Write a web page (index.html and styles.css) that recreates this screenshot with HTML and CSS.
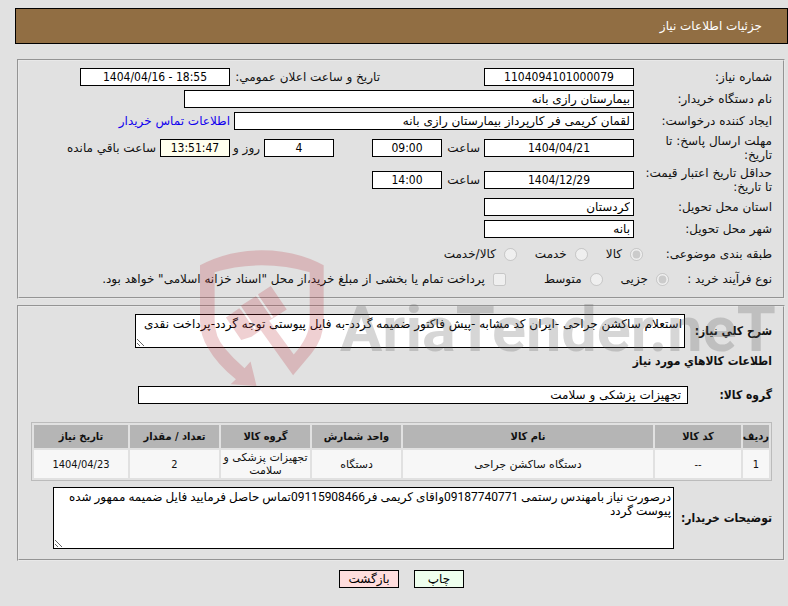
FILE: index.html
```html
<!DOCTYPE html>
<html lang="fa" dir="rtl">

<head>
  <meta charset="UTF-8">
  <meta name="viewport" content="width=device-width, initial-scale=1.0">
  <title>جزئیات اطلاعات نیاز</title>
  <link rel="stylesheet" href="styles.css">
</head>

<body>
  <h1 class="page-title">جزئیات اطلاعات نیاز</h1>

  <form>
    <fieldset class="box">
      <div class="row">
        <label class="caption" for="needNumber">شماره نیاز:</label>
        <input type="text" class="medium center" id="needNumber" value="1104094101000079" readonly>
        <label class="announce" for="announceDate">تاریخ و ساعت اعلان عمومي:</label>
        <input type="text" class="medium center" id="announceDate" dir="ltr" value="1404/04/16 - 18:55" readonly>
      </div>
      <div class="row">
        <label class="caption" for="buyerName">نام دستگاه خریدار:</label>
        <input type="text" class="wide" id="buyerName" value="بیمارستان رازی بانه" readonly>
      </div>
      <div class="row">
        <label class="caption" for="requester">ایجاد کننده درخواست:</label>
        <input type="text" class="large" id="requester" value="لقمان کریمی فر کارپرداز بیمارستان رازی بانه" readonly>
        <a href="#">اطلاعات تماس خریدار</a>
      </div>
      <div class="row tall">
        <label class="caption" for="replyDate">مهلت ارسال پاسخ: تا تاریخ:</label>
        <input type="text" class="medium center" id="replyDate" value="1404/04/21" readonly>
        <label class="hour" for="replyTime">ساعت</label>
        <input type="text" class="small center" id="replyTime" value="09:00" readonly>
        <input type="text" class="small center remaining" id="daysLeft" value="4" readonly>
        <label class="days" for="daysLeft">روز و</label>
        <input type="text" class="small center timer" id="timeLeft" value="13:51:47" readonly>
        <label for="timeLeft">ساعت باقي مانده</label>
      </div>
      <div class="row tall">
        <label class="caption" for="priceDate">حداقل تاریخ اعتبار قیمت: تا تاریخ:</label>
        <input type="text" class="medium center" id="priceDate" value="1404/12/29" readonly>
        <label class="hour" for="priceTime">ساعت</label>
        <input type="text" class="small center" id="priceTime" value="14:00" readonly>
      </div>
      <div class="row">
        <label class="caption" for="province">استان محل تحویل:</label>
        <input type="text" class="medium" id="province" value="کردستان" readonly>
      </div>
      <div class="row">
        <label class="caption" for="city">شهر محل تحویل:</label>
        <input type="text" class="medium" id="city" value="بانه" readonly>
      </div>
      <div class="row options subject">
        <span class="options-title">طبقه بندی موضوعی:</span>
        <label><input type="radio" name="subject" checked disabled>کالا</label>
        <label><input type="radio" name="subject" disabled>خدمت</label>
        <label><input type="radio" name="subject" disabled>کالا/خدمت</label>
      </div>
      <div class="row options process">
        <span class="options-title">نوع فرآیند خرید :</span>
        <label><input type="radio" name="process" checked disabled>جزیی</label>
        <label><input type="radio" name="process" disabled>متوسط</label>
        <label class="treasury"><input type="checkbox" disabled>پرداخت تمام یا بخشی از مبلغ خرید،از محل "اسناد خزانه اسلامی" خواهد بود.</label>
      </div>
    </fieldset>

    <fieldset class="box details">
      <div class="line">
        <label class="strong summary-label" for="summary">شرح کلي نیاز:</label>
        <textarea class="summary" id="summary" readonly>استعلام ساکشن جراحی -ایران کد مشابه -پیش فاکتور ضمیمه گردد-به فایل پیوستی توجه گردد-پرداخت نقدی</textarea>
      </div>
      <h2 class="strong">اطلاعات کالاهاي مورد نیاز</h2>
      <div class="line">
        <label class="strong group-label" for="goodsGroup">گروه کالا:</label>
        <input type="text" class="group" id="goodsGroup" value="تجهیزات پزشکی و سلامت" readonly>
      </div>

      <table>
        <colgroup>
          <col class="c-row">
          <col class="c-code">
          <col>
          <col class="c-mid">
          <col class="c-mid">
          <col class="c-mid">
          <col class="c-date">
        </colgroup>
        <thead>
          <tr>
            <th>ردیف</th>
            <th>کد کالا</th>
            <th>نام کالا</th>
            <th>واحد شمارش</th>
            <th>گروه کالا</th>
            <th>تعداد / مقدار</th>
            <th>تاریخ نیاز</th>
          </tr>
        </thead>
        <tbody>
          <tr>
            <td class="number">1</td>
            <td class="number">--</td>
            <td>دستگاه ساکشن جراحی</td>
            <td>دستگاه</td>
            <td>تجهیزات پزشکی و سلامت</td>
            <td class="number">2</td>
            <td class="number">1404/04/23</td>
          </tr>
        </tbody>
      </table>

      <div class="line">
        <label class="strong notes-label" for="notes">توضیحات خریدار:</label>
        <textarea class="notes" id="notes" readonly>درصورت نیاز بامهندس رستمی 09187740771واقای کریمی فر09115908466تماس حاصل فرمایید فایل ضمیمه ممهور شده پیوست گردد</textarea>
      </div>
    </fieldset>

    <div class="actions">
      <button type="button" class="print" onclick="window.print()">چاپ</button>
      <button type="button" class="back" onclick="history.back()">بازگشت</button>
    </div>
  </form>

  <!-- Watermark over the form -->
  <div class="watermark" dir="ltr">
    <svg class="shield" viewBox="60 60 373 410">
      <path d="M60 105Q145 60 245 60Q350 60 432 105V270Q432 325 395 370L340 436L243 300L215 320L184 330L138 262L178 234L184 240V226L228 198L235 205V192L273 167L321 238L268 272L342 373Q390 320 390 270V126Q320 105 245 105Q170 105 104 126V270Q104 320 135 355Q160 385 194 415L212 394L230 468L152 463L168 448Q110 400 85 355Q60 315 60 270Z" />
      <path class="gap" d="M181 230L226 296M231 194L278 262" />
    </svg>
    <span>AriaTender.neT</span>
  </div>
</body>

</html>
```
FILE: styles.css
```css
body {
  position: relative;
  margin: 0;
  padding: 8px 0 16px;
  font-family: "DejaVu Sans", sans-serif;
  font-size: 12px;
  line-height: 14px;
  color: #111;
  background-color: #e1e1e1;
}

input,
textarea,
button {
  box-sizing: border-box;
  font-family: inherit;
  font-size: 12px;
  line-height: 14px;
  color: #000;
}

.page-title {
  margin: 0 0 15px 0;
  margin-left: 15px;
  padding: 10px 25px;
  border: 1px solid #000;
  background-color: #916e43;
  color: #fff;
  font-size: 12px;
  font-weight: normal;
  line-height: 14px;
}

.box {
  min-width: 0;
  margin: 0 3px 6px 17px;
  padding: 5px 11px 7px 12px;
  border: 2px groove #e8e8e8;
}

.row {
  display: flex;
  align-items: center;
  gap: 4px;
  min-height: 22px;
}

.row.tall {
  min-height: 32px;
}

.caption {
  box-sizing: border-box;
  flex: none;
  width: 134px;
  padding-left: 4px;
}

input[type="text"] {
  height: 18px;
  padding: 0 3px;
  border: 1px solid #000;
  background-color: #fff;
}

.medium {
  width: 150px;
}

.small {
  width: 70px;
}

.wide {
  width: 450px;
}

.large {
  width: 400px;
}

.center,
.number {
  text-align: center;
  font-family: "DejaVu Sans Condensed", "DejaVu Sans", sans-serif;
}

.announce {
  width: 146px;
  margin-right: 100px;
  white-space: nowrap;
}

.hour {
  width: 34px;
}

.days {
  width: 26px;
  white-space: nowrap;
}

.remaining {
  margin-right: 34px;
}

input.timer {
  background-color: #ffffee;
}

a {
  color: #1100ee;
  text-decoration: none;
}

.options {
  gap: 18px;
}

.subject {
  min-height: 28px;
}

.options-title {
  width: 111px;
  white-space: nowrap;
}

.process .options-title {
  width: 85px;
}

.options label {
  display: flex;
  align-items: center;
  gap: 8px;
}

.options input {
  width: 13px;
  height: 13px;
  margin: 0;
}

.options .treasury {
  margin-right: 20px;
}

.details {
  padding-top: 7px;
  padding-bottom: 10px;
}

.line {
  display: flex;
  align-items: center;
  gap: 4px;
}

.strong {
  margin: 0;
  font-family: "DejaVu Sans Condensed", "DejaVu Sans", sans-serif;
  font-size: 12px;
  font-weight: bold;
  line-height: 14px;
}

h2.strong {
  padding: 6px 0 18px;
}

textarea {
  padding: 2px;
  border: 1px solid #000;
  background-color: #fff;
  overflow: hidden;
}

.summary-label {
  width: 83px;
}

.summary {
  width: 550px;
  height: 34px;
}

.group-label {
  width: 80px;
}

input.group {
  width: 550px;
  padding: 0 6px;
}

table {
  width: 100%;
  margin: 18px 0 6px;
  border: 1px solid #bbb;
  border-spacing: 2px;
  table-layout: fixed;
}

th,
td {
  padding: 0;
  text-align: center;
  font-size: 11px;
  line-height: 13px;
}

th {
  height: 23px;
  font-family: "DejaVu Sans Condensed", "DejaVu Sans", sans-serif;
  background-color: #b5b5b5;
}

td {
  height: 28px;
  background-color: #f7f7f7;
}

.c-row {
  width: 26px;
}

.c-code {
  width: 86px;
}

.c-mid {
  width: 89px;
}

.c-date {
  width: 94px;
}

.notes-label {
  width: 94px;
}

.notes {
  flex: 1;
  height: 62px;
  margin-left: 22px;
  font-family: Roboto, "DejaVu Sans", sans-serif;
}

.actions {
  display: flex;
  justify-content: center;
  gap: 15px;
  padding-top: 3px;
  padding-left: 15px;
}

button {
  height: 18px;
  padding: 0;
  border: 1px solid #000;
  cursor: pointer;
}

.print {
  width: 50px;
  background-color: #eeffee;
}

.back {
  width: 60px;
  background-color: #ffdddd;
}

.watermark {
  position: absolute;
  top: 250px;
  left: 200px;
  display: flex;
  align-items: flex-start;
  gap: 16px;
  pointer-events: none;
}

.shield {
  width: 124px;
  height: 137px;
  fill: #b92d37;
  opacity: 0.22;
}

.shield .gap {
  fill: none;
  stroke: #fff;
  stroke-width: 6px;
}

.watermark span {
  padding-top: 40px;
  font-family: Roboto, sans-serif;
  font-size: 63px;
  font-weight: bold;
  line-height: 80px;
  color: rgba(90, 90, 90, 0.25);
}
```
